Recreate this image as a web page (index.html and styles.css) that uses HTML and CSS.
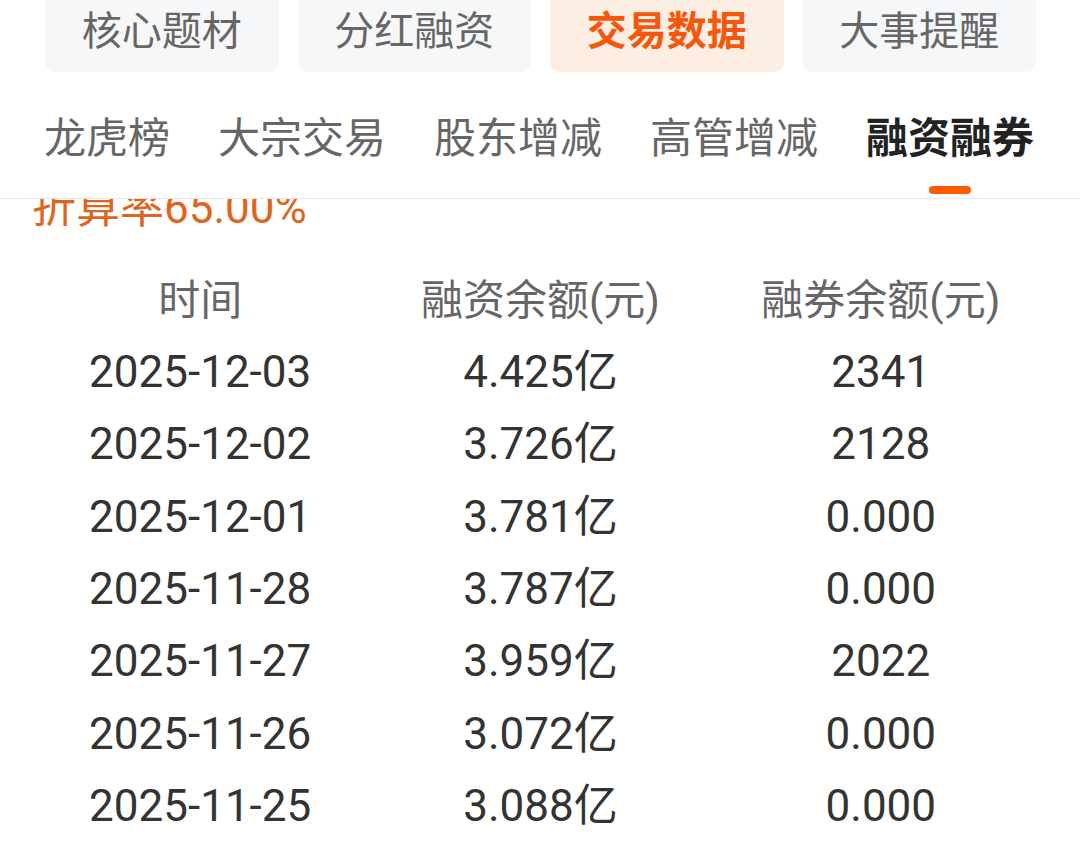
FILE: index.html
```html
<!DOCTYPE html>
<html lang="zh-CN">
<head>
<meta charset="utf-8">
<title>融资融券</title>
<link rel="stylesheet" href="styles.css">
</head>
<body>
<div class="page">
  <header class="header">
    <nav class="seg-tabs">
      <div class="seg">核心题材</div>
      <div class="seg">分红融资</div>
      <div class="seg seg-active">交易数据</div>
      <div class="seg">大事提醒</div>
    </nav>
    <nav class="sub-tabs">
      <div class="sub"><span class="sub-label">龙虎榜</span><span class="sub-bar"></span></div>
      <div class="sub"><span class="sub-label">大宗交易</span><span class="sub-bar"></span></div>
      <div class="sub"><span class="sub-label">股东增减</span><span class="sub-bar"></span></div>
      <div class="sub"><span class="sub-label">高管增减</span><span class="sub-bar"></span></div>
      <div class="sub sub-active"><span class="sub-label">融资融券</span><span class="sub-bar"></span></div>
    </nav>
  </header>
  <main class="content">
    <div class="rate">折算率65.00%</div>
    <div class="table">
      <div class="row row-head">
        <div class="cell">时间</div>
        <div class="cell">融资余额(元)</div>
        <div class="cell">融券余额(元)</div>
      </div>
      <div class="row"><div class="cell">2025-12-03</div><div class="cell">4.425亿</div><div class="cell">2341</div></div>
      <div class="row"><div class="cell">2025-12-02</div><div class="cell">3.726亿</div><div class="cell">2128</div></div>
      <div class="row"><div class="cell">2025-12-01</div><div class="cell">3.781亿</div><div class="cell">0.000</div></div>
      <div class="row"><div class="cell">2025-11-28</div><div class="cell">3.787亿</div><div class="cell">0.000</div></div>
      <div class="row"><div class="cell">2025-11-27</div><div class="cell">3.959亿</div><div class="cell">2022</div></div>
      <div class="row"><div class="cell">2025-11-26</div><div class="cell">3.072亿</div><div class="cell">0.000</div></div>
      <div class="row"><div class="cell">2025-11-25</div><div class="cell">3.088亿</div><div class="cell">0.000</div></div>
    </div>
  </main>
</div>
</body>
</html>
```

FILE: styles.css
```css
* {
  box-sizing: border-box;
}

html, body {
  margin: 0;
  padding: 0;
  background: #ffffff;
}

body {
  width: 1080px;
  height: 857px;
  overflow: hidden;
  font-family: Roboto, "Noto Sans CJK SC", "Noto Sans", sans-serif;
  color: #333333;
}

.page {
  display: flex;
  flex-direction: column;
}

.header {
  background: #ffffff;
}

.seg-tabs {
  display: flex;
  gap: 19px;
  padding: 0 44px 0 45px;
  margin-top: -10px;
}

.seg {
  flex: 1;
  height: 82px;
  padding-bottom: 6px;
  display: flex;
  align-items: center;
  justify-content: center;
  background: #f6f7f9;
  border-radius: 10px;
  font-size: 40px;
  color: #666666;
}

.seg-active {
  background: #fdeee4;
  color: #f5570c;
  font-weight: 700;
}

.sub-tabs {
  display: flex;
  gap: 48px;
  padding-left: 44px;
  height: 127px;
  border-bottom: 1px solid #e6e6e6;
}

.sub {
  display: flex;
  flex-direction: column;
  align-items: center;
  padding-top: 39px;
}

.sub-label {
  font-size: 42px;
  line-height: 56px;
  color: #666666;
  white-space: nowrap;
}

.sub-bar {
  width: 42px;
  height: 8px;
  margin-top: 19px;
  border-radius: 4px;
  background: transparent;
}

.sub-active .sub-label {
  color: #222222;
  font-weight: 700;
}

.sub-active .sub-bar {
  background: #ff5a00;
}

.content {
  overflow: hidden;
  height: 658px;
}

.rate {
  margin-top: -16px;
  padding-left: 32px;
  font-size: 44px;
  line-height: 50px;
  color: #e0651c;
}

.table {
  margin-top: 32px;
  padding: 0 29px 0 30px;
}

.row {
  display: grid;
  grid-template-columns: 1fr 1fr 1fr;
  height: 72.33px;
  align-items: center;
}

.row-head {
  height: 71px;
}

.cell {
  text-align: center;
  font-size: 44px;
  line-height: 56px;
  color: #333333;
  white-space: nowrap;
}

.row-head .cell {
  font-size: 42px;
  color: #666666;
}
```
